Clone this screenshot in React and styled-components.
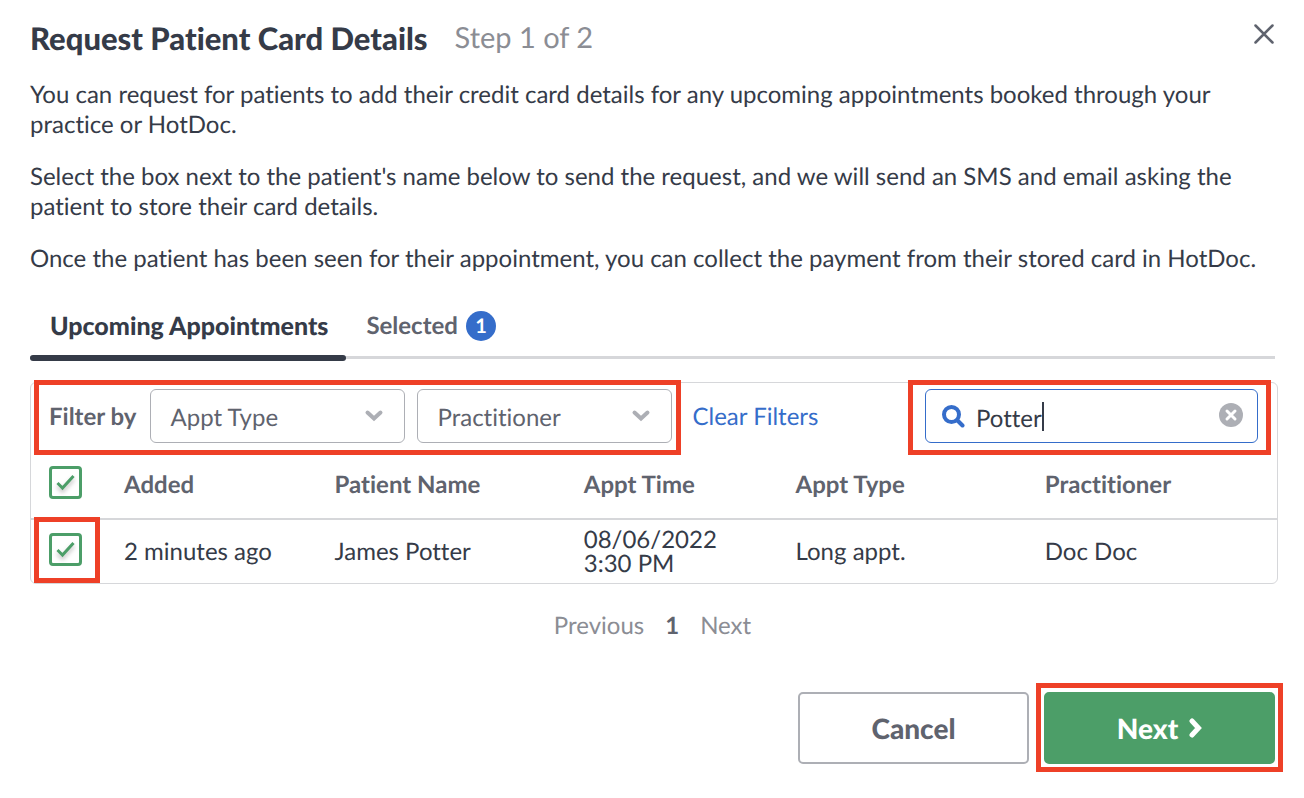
import React from 'react'
import styled, { createGlobalStyle, css } from 'styled-components'

const colors = {
  ink: '#353b48',
  slate: '#5f636e',
  muted: '#8b8d94',
  line: '#d6d7da',
  control: '#adafb5',
  blue: '#356dca',
  green: '#4c9e68',
  red: '#ee4027',
}

const GlobalStyle = createGlobalStyle`
  *, *::before, *::after {
    box-sizing: border-box;
  }

  body {
    margin: 0;
    background: #fff;
    color: ${colors.ink};
    font: 24px/30px Lato, sans-serif;
    font-variant-ligatures: none;
    text-rendering: geometricPrecision;
  }

  button, input, select {
    margin: 0;
    font: inherit;
    font-variant-ligatures: none;
    text-rendering: inherit;
    color: inherit;
  }
`

const StyledDialog = styled.main`
  padding: 18px 29px 33px 30px;
`

const StyledHeader = styled.header`
  display: flex;
  align-items: center;
  gap: 27px;
  height: 40px;
`

const StyledTitle = styled.h1`
  margin: 0;
  font-size: 31px;
  line-height: 40px;
  font-weight: 900;
`

const StyledStep = styled.span`
  font-size: 29px;
  line-height: 40px;
  color: ${colors.muted};
`

const StyledClose = styled.button`
  display: flex;
  align-self: flex-start;
  margin-left: auto;
  padding: 5px 0;
  border: 0;
  background: none;
  color: ${colors.slate};
  cursor: pointer;
`

const StyledIntro = styled.div`
  display: flex;
  flex-direction: column;
  gap: 22px;
  padding: 22px 0 30px;

  p {
    margin: 0;
  }
`

const StyledTabs = styled.div`
  display: flex;
  height: 57px;
  background: linear-gradient(${colors.line}, ${colors.line}) 0 52px / 100% 3px no-repeat;
`

const StyledTab = styled.button`
  display: flex;
  align-items: center;
  gap: 8px;
  padding: 0 18px 8px 20px;
  border: 0;
  border-bottom: 6px solid transparent;
  background: none;
  color: ${colors.slate};
  font-weight: 700;
  cursor: pointer;
  position: relative;

  ${props =>
    props.$active &&
    css`
      color: ${colors.ink};
      font-size: 25px;
      font-weight: 900;

      &::after {
        content: '';
        position: absolute;
        left: 0;
        right: 0;
        bottom: -6px;
        height: 6px;
        border-radius: 3px;
        background: ${colors.ink};
      }
    `};
`

const StyledBadge = styled.span`
  width: 30px;
  height: 30px;
  border-radius: 50%;
  background: ${colors.blue};
  color: #fff;
  font-size: 20px;
  text-align: center;
`

const StyledPanel = styled.section`
  margin: 21px -3px 0 0;
  border: 1px solid ${colors.line};
  border-radius: 6px;
`

// Frame drawn around the parts a reader has to use; inset is top/right/bottom/left
const StyledHighlight = styled.div`
  position: relative;
  display: flex;
  align-items: center;
  gap: ${props => props.$gap || 0}px;
  width: fit-content;

  &::after {
    content: '';
    position: absolute;
    inset: ${props => props.$inset};
    border: 5px solid ${colors.red};
    pointer-events: none;
  }
`

const StyledFilters = styled.div`
  display: flex;
  align-items: center;
  gap: 20px;
  padding: 6px 19px 0 18px;
`

const StyledFilterLabel = styled.span`
  padding: 2px 2px 0 0;
  color: ${colors.slate};
  font-weight: 700;
`

const StyledSelectWrapper = styled.div`
  position: relative;
  width: 255px;

  svg {
    position: absolute;
    right: 21px;
    top: 20px;
    color: ${colors.control};
    pointer-events: none;
  }
`

const StyledSelect = styled.select`
  display: block;
  appearance: none;
  width: 100%;
  height: 54px;
  padding: 4px 50px 0 19px;
  border: 1px solid ${colors.control};
  border-radius: 6px;
  background: #fff;
  color: ${colors.slate};
`

const StyledClear = styled.button`
  padding: 2px 0 0;
  border: 0;
  background: none;
  color: ${colors.blue};
  cursor: pointer;
`

const StyledPush = styled.div`
  margin-left: auto;
`

const StyledSearch = styled.label`
  display: flex;
  align-items: center;
  width: 333px;
  height: 54px;
  padding: 0 14px 0 16px;
  border: 1px solid ${colors.blue};
  border-radius: 6px;
  cursor: text;

  > svg {
    margin-right: 11px;
    color: ${colors.blue};
  }
`

const StyledSearchInput = styled.input`
  field-sizing: content;
  max-width: 220px;
  height: 32px;
  padding: 4px 0 0;
  border: 0;
  outline: 0;
  background: none;
  caret-color: transparent;
`

const StyledCaret = styled.span`
  width: 2px;
  height: 29px;
  background: ${colors.ink};
`

const StyledSearchClear = styled.button`
  display: flex;
  margin-left: auto;
  padding: 0 0 2px;
  border: 0;
  background: none;
  cursor: pointer;
`

const StyledTable = styled.table`
  width: 100%;
  margin-top: 7px;
  border-collapse: separate;
  border-spacing: 0;
  table-layout: fixed;
  text-align: left;
  line-height: 24px;
`

const StyledHead = styled.th`
  height: 70px;
  padding: 2px 0 0;
  border-bottom: 2px solid ${colors.line};
  color: ${colors.slate};
  font-weight: 700;
  width: ${props => props.$width};
`

const StyledCell = styled.td`
  height: 63px;
  padding: 0;
`

const StyledCheckCell = styled.div`
  padding: 0 0 5px 18px;
`

const StyledCheckLabel = styled.label`
  position: relative;
  display: block;
  width: 33px;
  height: 33px;

  svg {
    position: absolute;
    left: 0;
    top: 0;
    color: ${colors.green};
    filter: drop-shadow(0 3px 2px rgba(0, 0, 0, 0.25));
    pointer-events: none;
  }

  input:not(:checked) + svg {
    display: none;
  }
`

const StyledCheckbox = styled.input`
  display: block;
  appearance: none;
  width: 33px;
  height: 33px;
  border: 3px solid ${colors.green};
  border-radius: 4px;
  background: #fff;
`

const StyledPagination = styled.nav`
  display: flex;
  justify-content: center;
  gap: 21px;
  padding: 27px 0 51px;
  color: ${colors.muted};

  button {
    padding: 0;
    border: 0;
    background: none;
  }

  strong {
    color: ${colors.slate};
  }
`

const StyledFooter = styled.footer`
  display: flex;
  justify-content: flex-end;
  gap: 15px;
`

const StyledButton = styled.button`
  display: flex;
  align-items: center;
  justify-content: center;
  gap: 11px;
  width: 231px;
  height: 72px;
  border: 2px solid ${props => (props.$primary ? colors.green : colors.control)};
  border-radius: 5px;
  background: ${props => (props.$primary ? colors.green : '#fff')};
  color: ${props => (props.$primary ? '#fff' : colors.slate)};
  font-size: 28px;
  font-weight: 900;
  cursor: pointer;
`

const Chevron = () => (
  <svg width="20" height="14" viewBox="0 0 20 14" fill="none" stroke="currentColor">
    <path d="M3.5 3.5 L10 9.5 L16.5 3.5" strokeWidth="4" strokeLinecap="round" />
  </svg>
)

const Select = ({ label }) => (
  <StyledSelectWrapper>
    <StyledSelect aria-label={label}>
      <option>{label}</option>
    </StyledSelect>
    <Chevron />
  </StyledSelectWrapper>
)

const Check = ({ label }) => (
  <StyledCheckLabel>
    <StyledCheckbox type="checkbox" aria-label={label} defaultChecked />
    <svg width="33" height="33" viewBox="0 0 33 33" fill="none" stroke="currentColor">
      <path d="M8.5 17 L13.5 22 L24.5 10" strokeWidth="3" />
    </svg>
  </StyledCheckLabel>
)

const COLUMNS = [
  { title: 'Added', width: '16.9%' },
  { title: 'Patient Name', width: '20%' },
  { title: 'Appt Time', width: '17%' },
  { title: 'Appt Type', width: '20%' },
  { title: 'Practitioner', width: 'auto' },
]

const App = () => {
  const [tab, setTab] = React.useState('upcoming')
  const [search, setSearch] = React.useState('Potter')

  return (
    <>
      <GlobalStyle />
      <StyledDialog>
        <StyledHeader>
          <StyledTitle>Request Patient Card Details</StyledTitle>
          <StyledStep>Step 1 of 2</StyledStep>
          <StyledClose type="button" aria-label="Close">
            <svg width="22" height="22" viewBox="0 0 22 22" fill="none" stroke="currentColor">
              <path d="M2.5 2.5 L19.5 19.5 M19.5 2.5 L2.5 19.5" strokeWidth="2.5" strokeLinecap="round" />
            </svg>
          </StyledClose>
        </StyledHeader>

        <StyledIntro>
          <p>
            You can request for patients to add their credit card details for any upcoming
            appointments booked through your practice or HotDoc.
          </p>
          <p>
            Select the box next to the patient's name below to send the request, and we will send an
            SMS and email asking the patient to store their card details.
          </p>
          <p>
            Once the patient has been seen for their appointment, you can collect the payment from
            their stored card in HotDoc.
          </p>
        </StyledIntro>

        <StyledTabs role="tablist">
          <StyledTab
            type="button"
            role="tab"
            aria-selected={tab === 'upcoming'}
            $active={tab === 'upcoming'}
            onClick={() => setTab('upcoming')}
          >
            Upcoming Appointments
          </StyledTab>
          <StyledTab
            type="button"
            role="tab"
            aria-selected={tab === 'selected'}
            $active={tab === 'selected'}
            onClick={() => setTab('selected')}
          >
            Selected
            <StyledBadge>1</StyledBadge>
          </StyledTab>
        </StyledTabs>

        <StyledPanel>
          <StyledFilters>
            <StyledHighlight $gap={12} $inset="-9px -9px -12px -15px">
              <StyledFilterLabel>Filter by</StyledFilterLabel>
              <Select label="Appt Type" />
              <Select label="Practitioner" />
            </StyledHighlight>
            <StyledClear type="button">Clear Filters</StyledClear>
            <StyledPush>
              <StyledHighlight $inset="-9px -13px -12px -17px">
                <StyledSearch>
                  <svg width="23" height="23" viewBox="0 0 23 23" fill="none" stroke="currentColor">
                    <circle cx="9.5" cy="9.5" r="7.5" strokeWidth="4" />
                    <path d="M15.5 15.5 L20.5 20.5" strokeWidth="4" strokeLinecap="round" />
                  </svg>
                  <StyledSearchInput
                    type="text"
                    aria-label="Search"
                    value={search}
                    onChange={event => setSearch(event.target.value)}
                  />
                  <StyledCaret />
                  <StyledSearchClear
                    type="button"
                    aria-label="Clear search"
                    onClick={() => setSearch('')}
                  >
                    <svg width="24" height="24" viewBox="0 0 24 24" fill="none">
                      <circle cx="12" cy="12" r="12" fill={colors.control} />
                      <path
                        d="M8 8 L16 16 M16 8 L8 16"
                        stroke="#fff"
                        strokeWidth="3"
                        strokeLinecap="round"
                      />
                    </svg>
                  </StyledSearchClear>
                </StyledSearch>
              </StyledHighlight>
            </StyledPush>
          </StyledFilters>

          <StyledTable>
            <thead>
              <tr>
                <StyledHead $width="93px">
                  <StyledCheckCell>
                    <Check label="Select all" />
                  </StyledCheckCell>
                </StyledHead>
                {COLUMNS.map(({ title, width }) => (
                  <StyledHead key={title} $width={width}>
                    {title}
                  </StyledHead>
                ))}
              </tr>
            </thead>
            <tbody>
              <tr>
                <StyledCell>
                  <StyledCheckCell>
                    <StyledHighlight $inset="-16px -18px -17px -15px">
                      <Check label="Select James Potter" />
                    </StyledHighlight>
                  </StyledCheckCell>
                </StyledCell>
                <StyledCell>2 minutes ago</StyledCell>
                <StyledCell>James Potter</StyledCell>
                <StyledCell>
                  08/06/2022
                  <br />
                  3:30 PM
                </StyledCell>
                <StyledCell>Long appt.</StyledCell>
                <StyledCell>Doc Doc</StyledCell>
              </tr>
            </tbody>
          </StyledTable>
        </StyledPanel>

        <StyledPagination aria-label="Pagination">
          <button type="button">Previous</button>
          <strong>1</strong>
          <button type="button">Next</button>
        </StyledPagination>

        <StyledFooter>
          <StyledButton type="button">Cancel</StyledButton>
          <StyledHighlight $inset="-9px -8px -8px -8px">
            <StyledButton type="button" $primary>
              Next
              <svg width="13" height="20" viewBox="0 0 13 20" fill="none" stroke="currentColor">
                <path d="M3 3 L9.5 10 L3 17" strokeWidth="5" strokeLinecap="round" />
              </svg>
            </StyledButton>
          </StyledHighlight>
        </StyledFooter>
      </StyledDialog>
    </>
  )
}

export default App
